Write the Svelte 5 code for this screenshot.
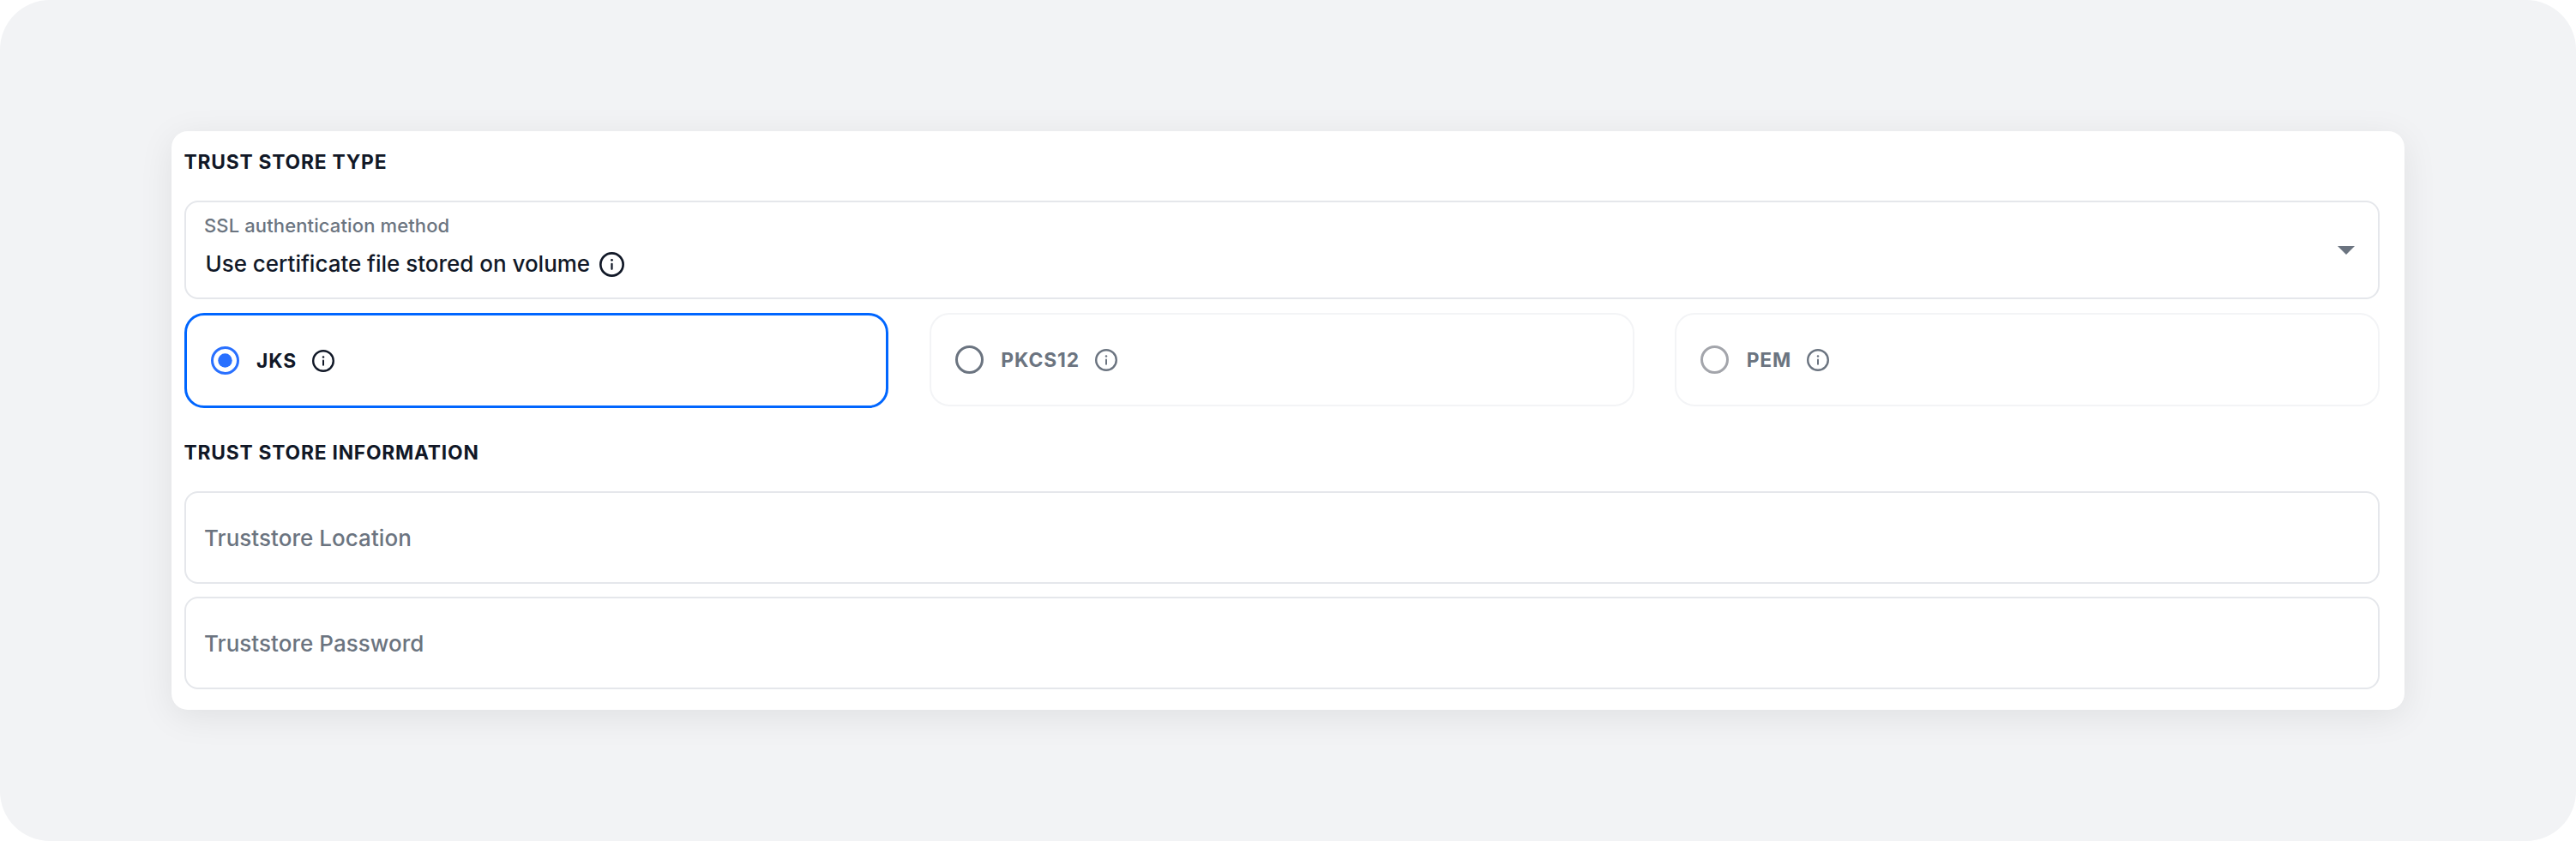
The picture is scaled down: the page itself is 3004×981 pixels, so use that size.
<script>
  /**
   * Trust store settings: authentication method, store type and store details.
   */

  const STORE_TYPES = [
    { id: 'jks', label: 'JKS' },
    { id: 'pkcs12', label: 'PKCS12' },
    { id: 'pem', label: 'PEM', muted: true },
  ];

  const FIELDS = [
    { id: 'location', label: 'Truststore Location' },
    { id: 'password', label: 'Truststore Password' },
  ];

  let selected = $state('jks');
</script>

{#snippet info_icon()}
  <svg class="info-icon" viewBox="0 0 26 26" aria-hidden="true">
    <circle cx="13" cy="13" r="11.8" fill="none" stroke="currentColor" stroke-width="2.4" />
    <circle cx="13" cy="8.4" r="1.25" fill="currentColor" />
    <path d="M13 12.4v5.4" stroke="currentColor" stroke-width="2" stroke-linecap="round" />
  </svg>
{/snippet}

<main class="stage">
  <section class="card">
    <h2 class="type-heading">Trust store type</h2>

    <div class="select" role="button" tabindex="-1">
      <div class="select-content">
        <span class="select-label">SSL authentication method</span>
        <span class="select-value">
          <span class="select-text">Use certificate file stored on volume</span>
          {@render info_icon()}
        </span>
      </div>
      <svg class="caret" viewBox="0 0 20 10" aria-hidden="true">
        <path d="M0 0h20L10 10z" fill="currentColor" />
      </svg>
    </div>

    <div class="options" role="radiogroup">
      {#each STORE_TYPES as type (type.id)}
        <button
          type="button"
          class="option"
          class:selected={selected === type.id}
          class:muted={type.muted}
          role="radio"
          aria-checked={selected === type.id}
          onclick={() => (selected = type.id)}
        >
          <svg class="radio" viewBox="0 0 33 33" aria-hidden="true">
            <circle cx="16.5" cy="16.5" r="15" fill="none" stroke="currentColor" stroke-width="3" />
            {#if selected === type.id}
              <circle cx="16.5" cy="16.5" r="8.2" fill="currentColor" />
            {/if}
          </svg>
          <span class="option-label">{type.label}</span>
          {@render info_icon()}
        </button>
      {/each}
    </div>

    <h2 class="info-heading">Trust store information</h2>

    <div class="fields">
      {#each FIELDS as field (field.id)}
        <div class="field">{field.label}</div>
      {/each}
    </div>
  </section>
</main>

<style>
  :global(body) {
    background: #fff;
  }

  .stage {
    box-sizing: border-box;
    height: 981px;
    padding: 153px 200px;
    border-radius: 58px;
    background: #f2f3f5;
    color: #111827;
    font-family: Inter, sans-serif;
  }

  .card {
    box-sizing: border-box;
    height: 675px;
    padding: 22px 29px 23px 14.5px;
    border-radius: 19px;
    background: #fff;
    box-shadow: 0 8px 40px rgba(0, 0, 0, 0.08);
  }

  h2 {
    margin: 0 0 31px;
    font-size: 22.8px;
    font-weight: 700;
    line-height: 28px;
    letter-spacing: 0.78px;
    text-transform: uppercase;
  }

  .info-heading {
    margin-top: 37px;
    margin-bottom: 31px;
  }

  /* Select */
  .select {
    box-sizing: border-box;
    display: flex;
    align-items: center;
    justify-content: space-between;
    height: 115px;
    padding: 0 27.5px 0 21.5px;
    border: 2px solid #e5e7eb;
    border-radius: 16px;
  }

  .select-content {
    display: flex;
    flex-direction: column;
    gap: 16px;
    height: 83px;
  }

  .select-label {
    color: #6b7480;
    font-size: 22px;
    font-weight: 500;
    line-height: 26px;
    letter-spacing: 0.12px;
  }

  .select-value {
    display: flex;
    align-items: center;
    gap: 11px;
    padding-left: 1.5px;
    line-height: 32px;
  }

  .select-text {
    font-size: 26px;
    font-weight: 500;
    letter-spacing: -0.02px;
  }

  .select-value :global(.info-icon) {
    width: 29px;
    height: 29px;
  }

  .caret {
    width: 20px;
    height: 10px;
    color: #6b7480;
  }

  .info-icon {
    display: block;
    flex-shrink: 0;
    width: 26px;
    height: 26px;
  }

  /* Store type options */
  .options {
    display: grid;
    grid-template-columns: repeat(3, 1fr);
    align-items: start;
    column-gap: 47.5px;
    height: 112px;
    margin-top: 16px;
  }

  .option {
    box-sizing: border-box;
    display: flex;
    align-items: center;
    height: 109px;
    padding: 0 28px;
    border: 2px solid #f3f4f6;
    border-radius: 23px;
    background: #fff;
    color: #6b7480;
    font: inherit;
    cursor: pointer;
  }

  .option.selected {
    height: 111px;
    border: 3px solid #0066ff;
    color: #111827;
  }

  .radio {
    width: 33px;
    height: 33px;
    margin-right: 20.5px;
  }

  .option.selected .radio {
    color: #2970ff;
  }

  .option.muted .radio {
    color: #a3a5ab;
  }

  .option-label {
    margin-right: 18px;
    font-size: 22.8px;
    font-weight: 700;
    letter-spacing: 0.9px;
  }

  /* Text fields */
  .fields {
    display: flex;
    flex-direction: column;
    gap: 15px;
  }

  .field {
    box-sizing: border-box;
    display: flex;
    align-items: center;
    height: 108px;
    padding: 1px 21.5px 0;
    border: 2px solid #e5e7eb;
    border-radius: 16px;
    color: #6b7480;
    font-size: 26px;
    font-weight: 500;
    letter-spacing: 0.04px;
  }
</style>
